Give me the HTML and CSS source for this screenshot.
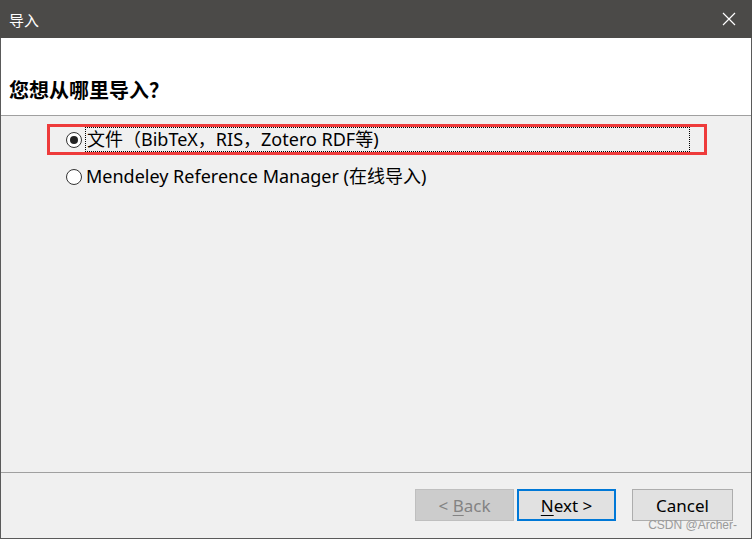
FILE: index.html
```html
<!DOCTYPE html>
<html lang="zh">
<head>
<meta charset="utf-8">
<link rel="stylesheet" href="styles.css">
</head>
<body>
<div class="window">
  <div class="titlebar">
    <span class="title">导入</span>
    <svg class="close" width="14" height="14" viewBox="0 0 14 14"><path d="M1 1L13 13M13 1L1 13" stroke="#fff" stroke-width="1.2" fill="none"/></svg>
  </div>
  <div class="header">
    <h1 class="question">您想从哪里导入？</h1>
  </div>
  <div class="content">
    <div class="option option-first">
      <span class="radio checked"></span>
      <span class="label focus">文件（BibTeX，RIS，Zotero RDF等)</span>
    </div>
    <div class="option">
      <span class="radio"></span>
      <span class="label">Mendeley Reference Manager (在线导入)</span>
    </div>
  </div>
  <div class="footer">
    <button class="btn disabled">&lt; <u>B</u>ack</button>
    <button class="btn primary"><u>N</u>ext &gt;</button>
    <button class="btn cancel">Cancel</button>
    <span class="watermark">CSDN @Archer-</span>
  </div>
</div>
</body>
</html>
```

FILE: styles.css
```css
* { box-sizing: border-box; }
html, body { margin: 0; padding: 0; }
body {
  width: 752px;
  height: 539px;
  font-family: "Noto Sans", "Noto Sans CJK SC", sans-serif;
  overflow: hidden;
}
.window {
  width: 752px;
  height: 539px;
  display: flex;
  flex-direction: column;
  border: 1px solid #5a5a5a;
  border-top: none;
  background: #f0f0f0;
}
.titlebar {
  height: 38px;
  background: #4b4a48;
  display: flex;
  align-items: center;
  justify-content: space-between;
  padding: 0 16px 0 9px;
  margin: 0 -1px;
  color: #fff;
}
.title {
  font-family: "Noto Sans CJK SC", sans-serif;
  font-size: 15px;
}
.close { display: block; }
.header {
  height: 78px;
  background: #fff;
  border-bottom: 1px solid #a0a0a0;
  display: flex;
  align-items: flex-end;
  padding: 0 0 12px 8px;
}
.question {
  margin: 0;
  font-family: "Noto Sans CJK SC", sans-serif;
  font-size: 20px;
  font-weight: 700;
  line-height: 26px;
  color: #000;
}
.content {
  flex: 1;
  position: relative;
  padding: 8px 0 0 46px;
  border-bottom: 1px solid #a0a0a0;
}
.option {
  display: flex;
  align-items: center;
  height: 31px;
  padding-left: 19px;
  width: 660px;
  font-size: 18px;
  color: #000;
  margin-bottom: 6px;
}
.option-first {
  border: 3px solid #ee3b3b;
  padding-left: 16px;
}
.radio {
  width: 16px;
  height: 16px;
  border: 1px solid #333;
  border-radius: 50%;
  background: #fff;
  margin-right: 3px;
  position: relative;
  flex: none;
}
.radio.checked::after {
  content: "";
  position: absolute;
  left: 3px;
  top: 3px;
  width: 8px;
  height: 8px;
  border-radius: 50%;
  background: #222;
}
.label {
  line-height: 23px;
  padding: 0 1px;
  white-space: nowrap;
}
.label.focus {
  border: 1px dotted #000;
  width: 605px;
  height: 25px;
  line-height: 23px;
}
.footer {
  height: 65px;
  display: flex;
  align-items: flex-start;
  padding: 16px 0 0 414px;
  position: relative;
}
.btn {
  width: 99px;
  height: 32px;
  font-family: "Noto Sans", sans-serif;
  font-size: 17px;
  background: #e1e1e1;
  border: 1px solid #adadad;
  color: #000;
  padding: 0;
  margin-right: 3px;
}
.btn.disabled {
  background: #cccccc;
  border-color: #bfbfbf;
  color: #838383;
}
.btn.primary {
  border: 2px solid #0078d7;
}
.btn.cancel {
  margin-left: 13px;
  width: 101px;
}
.btn u { text-underline-offset: 3px; }
.watermark {
  position: absolute;
  right: 14px;
  bottom: 6px;
  font-family: "Liberation Sans", sans-serif;
  font-size: 12px;
  color: #9a9a9a;
}
```
